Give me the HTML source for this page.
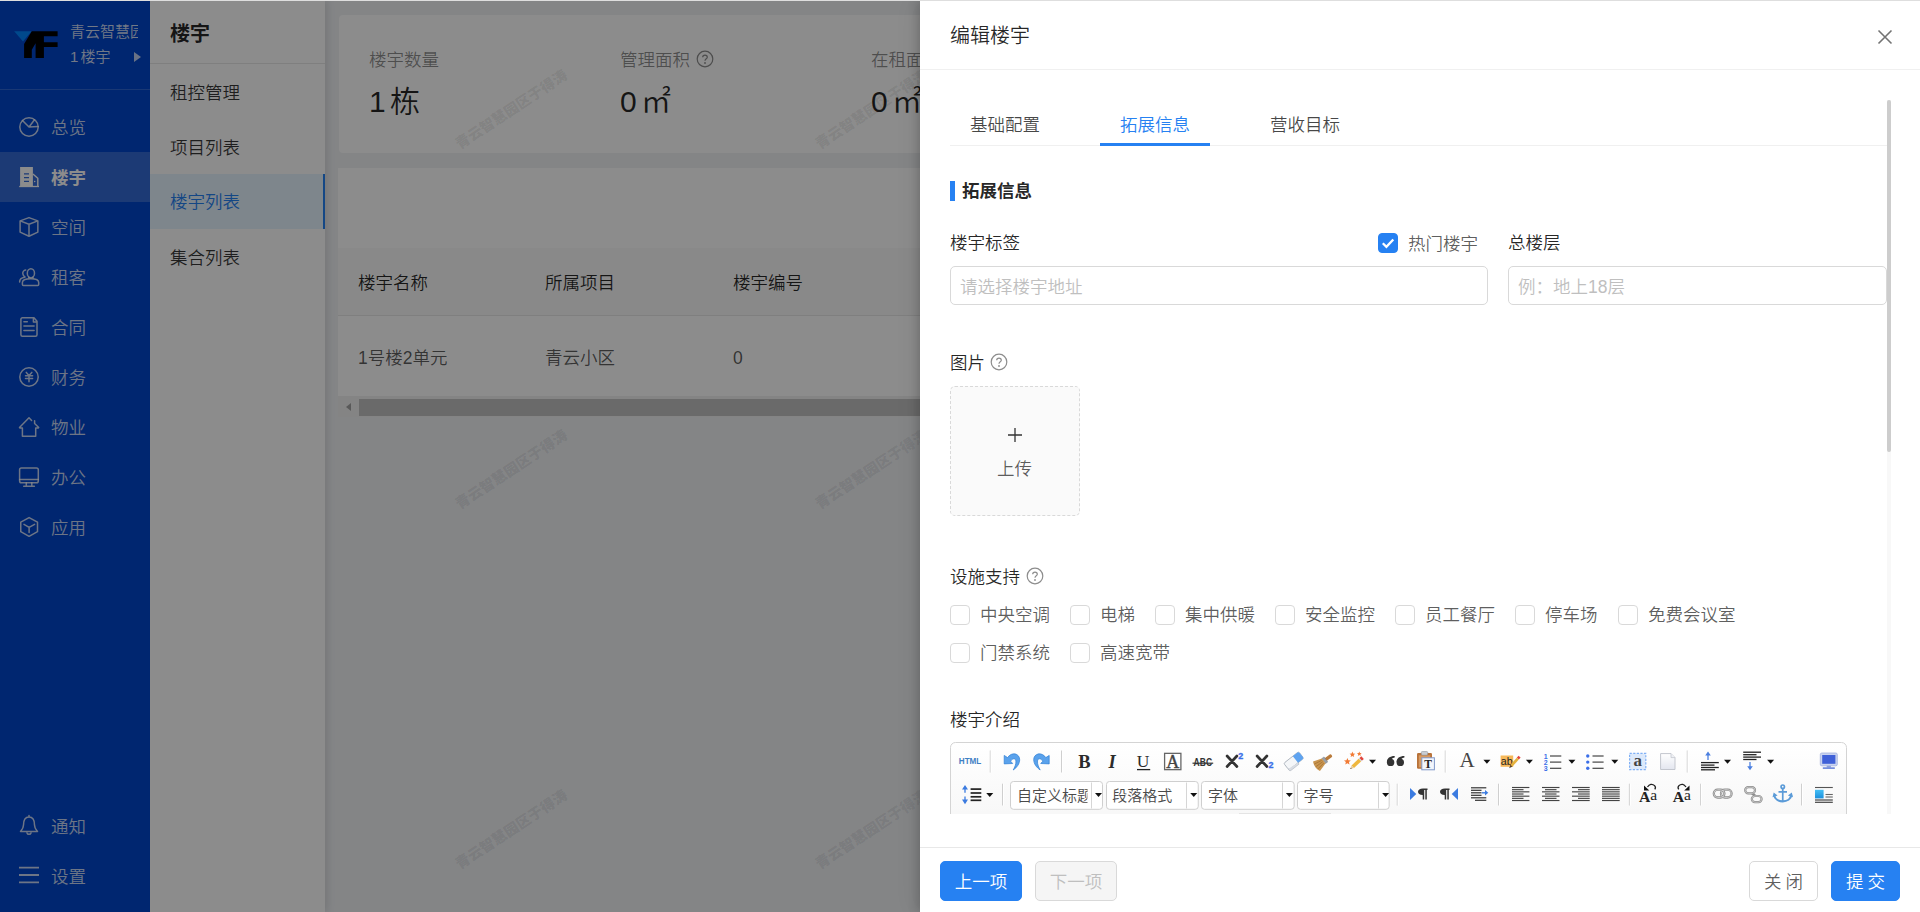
<!DOCTYPE html>
<html lang="zh-CN">
<head>
<meta charset="utf-8">
<title>编辑楼宇</title>
<style>
*{box-sizing:border-box;margin:0;padding:0}
html,body{width:1920px;height:912px;overflow:hidden;background:#f0f2f5}
body{font-family:"Liberation Sans","Noto Sans CJK SC",sans-serif;font-size:17.5px;color:rgba(0,0,0,.85);position:relative;font-weight:350}
.abs{position:absolute}
/* ---------- sidebar ---------- */
#side{position:absolute;left:0;top:0;width:150px;height:912px;background:#0045cc;color:#fff}
#side .hd{position:absolute;left:0;top:0;width:150px;height:90px;border-bottom:1px solid rgba(255,255,255,.18)}
#side .t1{position:absolute;left:70px;top:21px;width:68px;overflow:hidden;white-space:nowrap;font-size:15px;line-height:22px;color:rgba(255,255,255,.82)}
#side .t2{position:absolute;left:70px;top:46px;font-size:15px;line-height:22px;color:rgba(255,255,255,.82);white-space:nowrap}
#side .arr{position:absolute;left:134px;top:52px;width:0;height:0;border-left:7px solid rgba(255,255,255,.75);border-top:5.500px solid transparent;border-bottom:5.500px solid transparent}
.mi{position:absolute;left:0;width:150px;height:50px;line-height:50px;color:rgba(255,255,255,.78);font-size:17.5px}
.mi span{position:absolute;left:51px;top:1px;white-space:nowrap}
.mi svg{position:absolute;left:18px;top:14px;width:22px;height:22px;fill:none;stroke:rgba(255,255,255,.78);stroke-width:1.5;stroke-linecap:round;stroke-linejoin:round}
.mi.on{background:rgba(255,255,255,.2);color:#fff;font-weight:700}
/* ---------- submenu ---------- */
#sub{position:absolute;left:150px;top:0;width:175px;height:912px;background:#fff;box-shadow:2px 0 8px rgba(0,0,0,.12)}
#sub h3{position:absolute;left:20px;top:20px;font-size:20px;line-height:28px;font-weight:700;color:rgba(0,0,0,.85)}
#sub .ln{position:absolute;left:0;top:63px;width:175px;height:1px;background:#e8e8e8}
.si{position:absolute;left:0;width:175px;height:55px;line-height:55px;padding-left:20px;color:rgba(0,0,0,.78)}
.si.on{background:#e6f5ff;color:#2681f2;border-right:2px solid #2681f2}
/* ---------- main ---------- */
#main{position:absolute;left:325px;top:0;width:1595px;height:912px;background:#f0f2f5;overflow:hidden}
.card{position:absolute;background:#fff;border-radius:4px}
.stat .k{position:absolute;top:48px;font-size:17.5px;line-height:24px;color:rgba(0,0,0,.45);white-space:nowrap}
.stat .v{position:absolute;top:80px;font-size:30px;line-height:42px;color:rgba(0,0,0,.85);white-space:nowrap;word-spacing:-4px}
.wm{position:absolute;font-size:14.500px;color:rgba(0,0,0,.085);transform:rotate(-33.500deg);transform-origin:left bottom;white-space:nowrap;font-weight:900}
/* ---------- mask & drawer ---------- */
#mask{position:absolute;left:0;top:0;width:1920px;height:912px;background:rgba(0,0,0,.45)}
#drawer{position:absolute;left:920px;top:0;width:1000px;height:912px;background:#fff;box-shadow:-2px 0 10px rgba(0,0,0,.2),-6px 0 24px rgba(0,0,0,.04)}
#drawer .title{position:absolute;left:30px;top:21px;font-size:20px;line-height:30px;color:rgba(0,0,0,.85)}
#drawer .hline{position:absolute;left:0;top:69px;width:1000px;height:1px;background:#f0f0f0}
.tab{position:absolute;top:111px;font-size:17.5px;line-height:28px;color:rgba(0,0,0,.72);white-space:nowrap}
.lbl{position:absolute;font-size:17.5px;line-height:26px;color:rgba(0,0,0,.85);white-space:nowrap}
.inp{position:absolute;height:39px;border:1px solid #d9d9d9;border-radius:5px;background:#fff;line-height:40px;padding-left:9px;color:#bfbfbf;font-size:17.5px;white-space:nowrap}
.cb{position:absolute;width:20px;height:20px;border:1px solid #d9d9d9;border-radius:4px;background:#fff}
.ct{position:absolute;margin-top:1px;font-size:17.5px;line-height:26px;color:rgba(0,0,0,.65);white-space:nowrap}
.q{position:absolute;width:18px;height:18px}
.btn{position:absolute;top:861px;height:40px;border-radius:5px;font-size:17.5px;line-height:40px;text-align:center;white-space:nowrap}
</style>
</head>
<body>
<!-- ======= underlying page ======= -->
<div id="main">
<div class="card stat" style="left:14px;top:15px;width:1600px;height:138px">
<div class="k" style="left:30px;top:33px">楼宇数量</div><div class="v" style="left:30px;top:66px">1 栋</div>
<div class="k" style="left:281px;top:33px">管理面积</div>
<svg class="q" style="left:357px;top:35px" viewBox="0 0 18 18"><circle cx="9" cy="9" r="7.800" fill="none" stroke="rgba(0,0,0,.45)" stroke-width="1.200"/><path d="M6.700 7.200C6.700 4.300 11.300 4.300 11.300 7.200C11.300 8.800 9 8.800 9 10.800" fill="none" stroke="rgba(0,0,0,.45)" stroke-width="1.200"/><circle cx="9" cy="13" r=".900" fill="rgba(0,0,0,.45)"/></svg>
<div class="v" style="left:281px;top:66px">0 ㎡</div>
<div class="k" style="left:532px;top:33px">在租面积</div><div class="v" style="left:532px;top:66px">0 ㎡</div>
</div>
<div class="card" style="left:13px;top:168px;width:1600px;height:249px;border-radius:0">
<div class="abs" style="left:0;top:80px;width:1600px;height:68px;background:#fafafa;border-bottom:1px solid #e8e8e8"></div>
<div class="lbl" style="left:20px;top:102px">楼宇名称</div>
<div class="lbl" style="left:207px;top:102px">所属项目</div>
<div class="lbl" style="left:395px;top:102px">楼宇编号</div>
<div class="ct" style="left:20px;top:176px">1号楼2单元</div>
<div class="ct" style="left:207px;top:176px">青云小区</div>
<div class="ct" style="left:395px;top:176px">0</div>
<div class="abs" style="left:0;top:228px;width:1600px;height:21px;background:#f1f1f1"></div>
<div class="abs" style="left:8px;top:235px;width:0;height:0;border-right:5px solid #a3a3a3;border-top:4.500px solid transparent;border-bottom:4.500px solid transparent"></div>
<div class="abs" style="left:21px;top:231px;width:1580px;height:17px;background:#c1c1c1"></div>
</div>
<div class="wm" style="left:137px;top:132px">青云智慧园区于得涛</div>
<div class="wm" style="left:497px;top:132px">青云智慧园区于得涛</div>
<div class="wm" style="left:137px;top:492px">青云智慧园区于得涛</div>
<div class="wm" style="left:497px;top:492px">青云智慧园区于得涛</div>
<div class="wm" style="left:137px;top:852px">青云智慧园区于得涛</div>
<div class="wm" style="left:497px;top:852px">青云智慧园区于得涛</div>
</div>
<div id="sub">
<h3>楼宇</h3>
<div class="ln"></div>
<div class="si" style="top:66px">租控管理</div>
<div class="si" style="top:121px">项目列表</div>
<div class="si on" style="top:174px;line-height:57px">楼宇列表</div>
<div class="si" style="top:231px">集合列表</div>
</div>
<div id="side">
<div class="hd">
<svg class="abs" style="left:0;top:0" width="70" height="70" viewBox="0 0 70 70"><polygon points="14.200,31.200 31.600,31.200 23,41.400" fill="#0086ff"/><path d="M31.800 31.200H57.600V36.200H43.900V42.200H57.600V47.100H43.900V58.100H35.600V43.300L31.800 49.800V58.100H24.100V43.900Z" fill="#000"/></svg>
<div class="t1">青云智慧园区</div>
<div class="t2" style="word-spacing:-2px">1 楼宇</div>
<div class="arr"></div>
</div>
<div class="mi" style="top:102px"><svg viewBox="0 0 22 22"><circle cx="11" cy="11" r="9.200"/><path d="M4.500 4.500L11 11L16.500 3.700M11 11L20.200 10.500"/></svg><span>总览</span></div>
<div class="mi on" style="top:152px"><svg viewBox="0 0 22 22"><path d="M2.100 1.100H14.900V19.900H2.100ZM6 7.200H11V8.500H6ZM6 11H11V12.200H6ZM6 14.700H11V15.900H6Z" fill="#fff" fill-rule="evenodd" stroke="none"/><path d="M14.900 8L19.800 12.300V19.900" fill="none" stroke="#fff" stroke-width="1.400" stroke-linecap="butt"/><circle cx="16.700" cy="15.400" r=".750" fill="#fff" stroke="none"/><path d="M1.200 20.500H21" fill="none" stroke="#fff" stroke-width="1.300" stroke-linecap="butt"/></svg><span>楼宇</span></div>
<div class="mi" style="top:202px"><svg viewBox="0 0 22 22"><path d="M11 1.600L19.850 4.900V16.100L11 20.200L2.100 16.100V4.900ZM2.100 4.900L11 8.300L19.850 4.900M11 8.300V20.200"/></svg><span>空间</span></div>
<div class="mi" style="top:252px"><svg viewBox="0 0 22 22"><ellipse cx="12.900" cy="7.200" rx="3.600" ry="4.500"/><path d="M5.400 19.500A1 1 0 0 1 4.400 18.500V16.500C4.400 14 8 12.800 12.900 12.800C17.800 12.800 20.700 14 20.700 16.500V18.500A1 1 0 0 1 19.700 19.500ZM10.800 11.200V12.900M15 11.200V12.900M7.700 4.100C5.500 4.300 4.600 6 4.800 7.600C5 9.200 5.800 10.300 7 11M6.600 11.300C3.500 11.800 1.600 13.300 1.600 16"/></svg><span>租客</span></div>
<div class="mi" style="top:302px"><svg viewBox="0 0 22 22"><path d="M4.400 1.800H16L19 5.200V18.700A1.500 1.500 0 0 1 17.500 20.200H4.400A1.500 1.500 0 0 1 2.900 18.700V3.300A1.500 1.500 0 0 1 4.400 1.800ZM15.400 2.200V5.900H18.800M5.900 5.700H9.300M5.900 10.100H16.100M5.900 14.500H16.100"/></svg><span>合同</span></div>
<div class="mi" style="top:352px"><svg viewBox="0 0 22 22"><circle cx="11" cy="11" r="9.200"/><path d="M8.300 6.400L11 9.400L13.800 6.400M11 9.400V15.700M7.500 9.700H14.600M7.500 12.600H14.600"/></svg><span>财务</span></div>
<div class="mi" style="top:402px"><svg viewBox="0 0 22 22"><path d="M13.600 4.400L11 1.700L1.500 11.500L2 12.100H4.400V20.300H17.700V12.100H20.200L20.700 11.500L16.600 7.500V4.700"/></svg><span>物业</span></div>
<div class="mi" style="top:452px"><svg viewBox="0 0 22 22"><rect x="1.600" y="1.900" width="18.700" height="14.800" rx="1.800"/><path d="M1.600 13.400H20.300M8.300 16.700V20.300M13.800 16.700V20.300M5.700 20.300H16.400"/></svg><span>办公</span></div>
<div class="mi" style="top:502px"><svg viewBox="0 0 22 22"><path d="M11.100 1.600L19.500 6.200V15.700L11.100 20.300L2.750 15.700V6.200ZM6 8.300L11.100 11.300L16.600 8.300M11.100 11.300V16.600"/></svg><span>应用</span></div>
<div class="mi" style="top:801px"><svg viewBox="0 0 22 22" style="top:13px"><path d="M11 1.500V3M11 3C6.500 3 5.500 7.500 5.500 11C5.500 14 4 15.500 2.500 17.500H19.500C18 15.500 16.500 14 16.500 11C16.500 7.500 15.500 3 11 3M9 19C9.500 20.800 12.500 20.800 13 19"/></svg><span>通知</span></div>
<div class="mi" style="top:851px"><svg viewBox="0 0 22 22" style="top:13px"><path d="M1 3.600H21M1 11H21M1 18.400H21" style="stroke-linecap:butt;stroke-width:1.800"/></svg><span>设置</span></div>
</div>
<div id="mask"></div>
<!-- ======= drawer ======= -->
<div id="drawer">
<div class="title">编辑楼宇</div>
<svg class="abs" style="left:957px;top:29px" width="16" height="16" viewBox="0 0 16 16"><path d="M1.500 1.500L14.500 14.500M14.500 1.500L1.500 14.500" stroke="rgba(0,0,0,.55)" stroke-width="1.600" fill="none"/></svg>
<div class="hline"></div>
<!-- tabs -->
<div class="abs" style="left:30px;top:145px;width:937px;height:1px;background:#f0f0f0"></div>
<div class="tab" style="left:50px">基础配置</div>
<div class="tab" style="left:200px;color:#2681f2">拓展信息</div>
<div class="tab" style="left:350px">营收目标</div>
<div class="abs" style="left:180px;top:143px;width:110px;height:3px;background:#2681f2"></div>
<!-- section -->
<div class="abs" style="left:30px;top:181px;width:5px;height:20px;background:#2681f2"></div>
<div class="lbl" style="left:42px;top:178px;font-weight:700">拓展信息</div>
<div class="lbl" style="left:30px;top:230px">楼宇标签</div>
<div class="cb" style="left:458px;top:233px;background:#2681f2;border-color:#2681f2"><svg class="abs" style="left:0;top:0" width="18" height="18" viewBox="0 0 18 18"><path d="M3.800 9.300L7.400 12.900L14.300 5.500" fill="none" stroke="#fff" stroke-width="2.300"/></svg></div>
<div class="ct" style="left:488px;top:230px">热门楼宇</div>
<div class="lbl" style="left:588px;top:230px">总楼层</div>
<div class="inp" style="left:30px;top:266px;width:538px">请选择楼宇地址</div>
<div class="inp" style="left:588px;top:266px;width:379px">例：地上18层</div>
<div class="lbl" style="left:30px;top:350px">图片</div>
<svg class="q" style="left:70px;top:353px" viewBox="0 0 18 18"><circle cx="9" cy="9" r="7.800" fill="none" stroke="rgba(0,0,0,.45)" stroke-width="1.200"/><path d="M6.700 7.200C6.700 4.300 11.300 4.300 11.300 7.200C11.300 8.800 9 8.800 9 10.800" fill="none" stroke="rgba(0,0,0,.45)" stroke-width="1.200"/><circle cx="9" cy="13" r=".900" fill="rgba(0,0,0,.45)"/></svg>
<div class="abs" style="left:30px;top:386px;width:130px;height:130px;border:1px dashed #d9d9d9;border-radius:5px;background:#fafafa"></div>
<svg class="abs" style="left:88px;top:428px" width="14" height="14" viewBox="0 0 14 14"><path d="M7 0V14M0 7H14" stroke="rgba(0,0,0,.8)" stroke-width="1.300"/></svg>
<div class="ct" style="left:77px;top:455px">上传</div>
<div class="lbl" style="left:30px;top:564px">设施支持</div>
<svg class="q" style="left:106px;top:567px" viewBox="0 0 18 18"><circle cx="9" cy="9" r="7.800" fill="none" stroke="rgba(0,0,0,.45)" stroke-width="1.200"/><path d="M6.700 7.200C6.700 4.300 11.300 4.300 11.300 7.200C11.300 8.800 9 8.800 9 10.800" fill="none" stroke="rgba(0,0,0,.45)" stroke-width="1.200"/><circle cx="9" cy="13" r=".900" fill="rgba(0,0,0,.45)"/></svg><div class="cb" style="left:30px;top:605px"></div><div class="ct" style="left:60px;top:601px">中央空调</div>
<div class="cb" style="left:150px;top:605px"></div><div class="ct" style="left:180px;top:601px">电梯</div>
<div class="cb" style="left:235px;top:605px"></div><div class="ct" style="left:265px;top:601px">集中供暖</div>
<div class="cb" style="left:355px;top:605px"></div><div class="ct" style="left:385px;top:601px">安全监控</div>
<div class="cb" style="left:475px;top:605px"></div><div class="ct" style="left:505px;top:601px">员工餐厅</div>
<div class="cb" style="left:595px;top:605px"></div><div class="ct" style="left:625px;top:601px">停车场</div>
<div class="cb" style="left:698px;top:605px"></div><div class="ct" style="left:728px;top:601px">免费会议室</div>
<div class="cb" style="left:30px;top:643px"></div><div class="ct" style="left:60px;top:639px">门禁系统</div>
<div class="cb" style="left:150px;top:643px"></div><div class="ct" style="left:180px;top:639px">高速宽带</div>

<div class="lbl" style="left:30px;top:707px">楼宇介绍</div>
<!-- editor toolbar -->
<!--ED--><svg class="abs" style="left:0;top:735px" width="1000" height="79" viewBox="920 735 1000 79" font-family="Liberation Sans,Noto Sans CJK SC,sans-serif"><defs><linearGradient id="tbg" x1="0" y1="0" x2="0" y2="1"><stop offset="0" stop-color="#fff"/><stop offset="1" stop-color="#f6f6f6"/></linearGradient><linearGradient id="docg" x1="0" y1="0" x2="0" y2="1"><stop offset="0" stop-color="#fff"/><stop offset="1" stop-color="#e3e6ef"/></linearGradient><linearGradient id="sqg" x1="0" y1="0" x2="0" y2="1"><stop offset="0" stop-color="#45c0f5"/><stop offset="1" stop-color="#1c8fdc"/></linearGradient><clipPath id="c1"><rect x="1011" y="782" width="76.500" height="27"/></clipPath></defs><rect x="950.500" y="742.500" width="896" height="90" rx="5" fill="url(#tbg)" stroke="#d4d4d4"/><text x="958.800" y="764.300" font-size="8.500" font-weight="700" fill="#3f7fc4" textLength="22.500" lengthAdjust="spacingAndGlyphs">HTML</text><path d="M990.25 750.5V772.5" stroke="#cfcfcf" stroke-width="1"/><path d="M991.25 750.5V772.5" stroke="#fff" stroke-width="1"/><path d="M1004.200 755.400L1004.200 763.900L1012.700 763.500L1010.600 761.200C1012.300 758.300 1015.600 757.800 1015.900 761C1016.200 764.500 1014.500 767.500 1013.200 770C1017 767.500 1019.700 763.500 1019.700 759.800C1019.700 753.200 1011.500 751.500 1007.600 757.600Z" fill="#5aa2ec" stroke="#2f7fd6" stroke-width=".700"/><path d="M1004.200 755.400L1004.200 763.900L1012.700 763.500L1010.600 761.200C1012.300 758.300 1015.600 757.800 1015.900 761C1016.200 764.500 1014.500 767.500 1013.200 770C1017 767.500 1019.700 763.500 1019.700 759.800C1019.700 753.200 1011.500 751.500 1007.600 757.600Z" fill="#5aa2ec" stroke="#2f7fd6" stroke-width=".700" transform="translate(2053.400,0) scale(-1,1)"/><path d="M1061.5 750.5V772.5" stroke="#cfcfcf" stroke-width="1"/><path d="M1062.5 750.5V772.5" stroke="#fff" stroke-width="1"/><g font-family="Liberation Serif,serif" fill="#2b2b2b"><text x="1078.300" y="767.800" font-size="18.500" font-weight="700">B</text><text x="1108.500" y="767.800" font-size="18.500" font-weight="700" font-style="italic">I</text><text x="1136.800" y="767.400" font-size="17.500">U</text></g><path d="M1137 769.6H1150.2" stroke="#222" stroke-width="1.3"/><rect x="1164.600" y="753.350" width="16.300" height="16.300" fill="#fff" stroke="#666" stroke-width="1.300"/><text x="1172.750" y="768.300" font-size="18" text-anchor="middle" font-family="Liberation Serif,serif" fill="#444" stroke="#444" stroke-width=".400">A</text><text x="1193.600" y="766.400" font-size="10.500" font-weight="700" fill="#333" textLength="18.500" lengthAdjust="spacingAndGlyphs">ABC</text><path d="M1192.5 763.2H1213.2" stroke="#333" stroke-width="1.2"/><path d="M1227.1 756L1236.9 766.500M1236.9 756L1227.1 766.500" stroke="#333" stroke-width="2.700" stroke-linecap="round"/><text x="1238.3" y="758.8" font-size="9" font-weight="700" fill="#3b6fe8" stroke="#3b6fe8" stroke-width=".300">2</text><path d="M1257.1 756L1266.9 766.500M1266.9 756L1257.1 766.500" stroke="#333" stroke-width="2.700" stroke-linecap="round"/><text x="1268.5" y="767.9" font-size="9" font-weight="700" fill="#3b6fe8" stroke="#3b6fe8" stroke-width=".300">2</text><g transform="translate(1293.750,760.800) rotate(-38) scale(.86,.84)"><rect x="-11" y="-5" width="22" height="10" rx="1.800" fill="#f4f6f8" stroke="#a9b0ba" stroke-width="1"/><path d="M2.500 -5H9.200A1.800 1.800 0 0 1 11 -3.200V3.200A1.800 1.800 0 0 1 9.200 5H2.500Z" fill="#5ea3f0"/><path d="M-11 3.500V5.500A1.500 1.500 0 0 0 -9.500 7H2.500V5" fill="#d9dde3" stroke="#a9b0ba" stroke-width=".600"/></g><g transform="translate(1323.300,761.300) rotate(54) scale(.86,.8)"><rect x="-1.900" y="-13" width="3.800" height="10" rx="1.600" fill="#b97a3a"/><rect x="-3.600" y="-4" width="7.200" height="3.400" fill="#9aa0a8" stroke="#6f747b" stroke-width=".500"/><path d="M-3.600 -.600H3.600L6.800 10.500C3 12.800 -3 12.800 -6.800 10.500Z" fill="#c9954f"/><path d="M-2 1L-3.500 11M0 1V11.800M2 1L3.500 11" stroke="#9c6a2c" stroke-width=".700" fill="none"/></g><g transform="translate(1356.800,763) rotate(47) scale(.95,.88)"><rect x="-1.900" y="-9" width="3.800" height="3" fill="#e2453d"/><rect x="-1.900" y="-6" width="3.800" height="1.300" fill="#c9ccd2"/><rect x="-1.900" y="-4.700" width="3.800" height="11" fill="#efb73e"/><path d="M-1.900 6.300H1.900L0 10Z" fill="#e8c89a"/><path d="M-.700 8.600H.700L0 10Z" fill="#333"/></g><polygon points="1347.4,758 1348.35,760.29 1350.82,760.49 1348.94,762.1 1349.52,764.51 1347.4,763.22 1345.28,764.51 1345.86,762.1 1343.98,760.49 1346.45,760.29" fill="#f27b35"/><polygon points="1352.4,751.6 1353.19,753.51 1355.25,753.67 1353.68,755.02 1354.16,757.03 1352.4,755.95 1350.64,757.03 1351.12,755.02 1349.55,753.67 1351.61,753.51" fill="#f27b35"/><polygon points="1359.3,751.4 1359.96,752.99 1361.68,753.13 1360.37,754.25 1360.77,755.92 1359.3,755.02 1357.83,755.92 1358.23,754.25 1356.92,753.13 1358.64,752.99" fill="#f27b35"/><polygon points="1369,759.75 1376,759.75 1372.5,763.75" fill="#111"/><path d="M1386.9 762.300C1386.9 758.200 1389.9 756 1394.7 756L1394.7 757.600C1392.1 758.200 1391.1 759.500 1391.3 761Z" fill="#333"/><circle cx="1390.6" cy="762.400" r="3.700" fill="#333"/><path d="M1396.6 762.300C1396.6 758.200 1399.6 756 1404.4 756L1404.4 757.600C1401.8 758.200 1400.8 759.500 1401 761Z" fill="#333"/><circle cx="1400.3" cy="762.400" r="3.700" fill="#333"/><rect x="1417" y="753" width="15" height="15.700" rx="1.200" fill="#b87239"/><rect x="1418.800" y="755.300" width="11.400" height="12" fill="#d79a62"/><rect x="1421.300" y="751.500" width="6.400" height="3.600" rx="1" fill="#c9cdd3" stroke="#8f959d" stroke-width=".600"/><rect x="1421.800" y="757.800" width="12.600" height="12" fill="#f3f6fc" stroke="#7f97c8" stroke-width="1"/><text x="1428.100" y="768.300" font-size="11.500" font-weight="700" text-anchor="middle" font-family="Liberation Serif,serif" fill="#222">T</text><path d="M1445.25 750.5V772.5" stroke="#cfcfcf" stroke-width="1"/><path d="M1446.25 750.5V772.5" stroke="#fff" stroke-width="1"/><text x="1459.600" y="766.900" font-size="21" font-family="Liberation Serif,serif" fill="#444">A</text><polygon points="1483.4,759.75 1490.4,759.75 1486.9,763.75" fill="#111"/><rect x="1500.600" y="755.500" width="12.600" height="11.300" fill="#f6b95a"/><text x="1500.800" y="765.300" font-size="11.500" fill="#222" textLength="11.800" lengthAdjust="spacingAndGlyphs">ab</text><g transform="translate(1514,762.800) rotate(42)"><rect x="-1.400" y="-8.300" width="2.800" height="2.600" fill="#e2453d"/><rect x="-1.400" y="-5.700" width="2.800" height="9.500" fill="#e6b13c"/><path d="M-1.400 3.800H1.400L0 7.200Z" fill="#5a4630"/></g><polygon points="1525.9,759.75 1532.9,759.75 1529.4,763.75" fill="#111"/><text x="1543.800" y="758.5" font-size="7" font-weight="700" fill="#3b6fe8">1</text><path d="M1550 756H1561.3" stroke="#444" stroke-width="1.2"/><text x="1543.800" y="764.6" font-size="7" font-weight="700" fill="#3b6fe8">2</text><path d="M1550 762.1H1561.3" stroke="#444" stroke-width="1.2"/><text x="1543.800" y="770.8" font-size="7" font-weight="700" fill="#3b6fe8">3</text><path d="M1550 768.3H1561.3" stroke="#444" stroke-width="1.2"/><polygon points="1568.4,759.75 1575.4,759.75 1571.9,763.75" fill="#111"/><circle cx="1587.750" cy="756" r="1.700" fill="#3b6fe8"/><path d="M1592.5 756H1603.6" stroke="#444" stroke-width="1.2"/><circle cx="1587.750" cy="762.1" r="1.700" fill="#3b6fe8"/><path d="M1592.5 762.1H1603.6" stroke="#444" stroke-width="1.2"/><circle cx="1587.750" cy="768.3" r="1.700" fill="#3b6fe8"/><path d="M1592.5 768.3H1603.6" stroke="#444" stroke-width="1.2"/><polygon points="1611.25,759.75 1618.25,759.75 1614.75,763.75" fill="#111"/><rect x="1629.600" y="753.350" width="16.200" height="16.200" fill="#dce9fb" stroke="#7fb0f5" stroke-width="1.200" stroke-dasharray="2.200 1.400"/><text x="1637.750" y="766" font-size="17" font-weight="700" text-anchor="middle" font-family="Liberation Serif,serif" fill="#444">a</text><path d="M1660.600 753.600H1671L1675 757.600V769.500H1660.600Z" fill="url(#docg)" stroke="#c3c6ce" stroke-width="1"/><path d="M1671 753.600V757.600H1675" fill="#eef0f5" stroke="#c3c6ce" stroke-width=".800"/><path d="M1687.25 750.5V772.5" stroke="#cfcfcf" stroke-width="1"/><path d="M1688.25 750.5V772.5" stroke="#fff" stroke-width="1"/><path d="M1701 762.6H1718.8" stroke="#222" stroke-width="1.3"/><path d="M1701 765.1H1714.5" stroke="#222" stroke-width="1.3"/><path d="M1701 767.5H1718.8" stroke="#222" stroke-width="1.3"/><path d="M1701 769.8H1715" stroke="#222" stroke-width="1.3"/><path d="M1708 760V753" stroke="#4a7fe0" stroke-width="1.300"/><path d="M1705.200 755.500L1708 751.600L1710.800 755.500Z" fill="#4a7fe0"/><polygon points="1724,759.75 1731,759.75 1727.5,763.75" fill="#111"/><path d="M1743.2 752.2H1761" stroke="#222" stroke-width="1.3"/><path d="M1743.2 754.7H1756.5" stroke="#222" stroke-width="1.3"/><path d="M1743.2 757.1H1761" stroke="#222" stroke-width="1.3"/><path d="M1743.2 759.5H1756.5" stroke="#222" stroke-width="1.3"/><path d="M1750 762V768.500" stroke="#4a7fe0" stroke-width="1.300"/><path d="M1747.200 766.200L1750 770.200L1752.800 766.200Z" fill="#4a7fe0"/><polygon points="1767.1,759.75 1774.1,759.75 1770.6,763.75" fill="#111"/><rect x="1820.300" y="753" width="17" height="12.800" rx="1.500" fill="#c9d3ef" stroke="#a3b1de" stroke-width=".800"/><rect x="1822.200" y="755" width="13.200" height="8.800" fill="#3f60d8"/><rect x="1826.700" y="765.800" width="4.200" height="1.700" fill="#8ea2dc"/><rect x="1822.800" y="767.400" width="12" height="1.400" fill="#5575d6"/><path d="M965 787V792.800M965 796.400V802" stroke="#3b7be0" stroke-width="1.300"/><path d="M962 789.500L965 785L968 789.500Z M962 799.600L965 804.200L968 799.600Z" fill="#3b7be0"/><path d="M970.6 789.1H981.3" stroke="#222" stroke-width="1.7"/><path d="M970.6 793H981.3" stroke="#222" stroke-width="1.7"/><path d="M970.6 796.8H981.3" stroke="#222" stroke-width="1.7"/><path d="M970.6 800.3H981.3" stroke="#222" stroke-width="1.7"/><polygon points="986.25,793 993.25,793 989.75,797" fill="#111"/><path d="M1002.5 783.7V805.5" stroke="#cfcfcf" stroke-width="1"/><path d="M1003.5 783.7V805.5" stroke="#fff" stroke-width="1"/><rect x="1010.5" y="781.500" width="92" height="27.800" rx="3" fill="#fff" stroke="#cfcfcf"/><path d="M1091.5 782.500V808.500" stroke="#d6d6d6"/><polygon points="1095,793 1102,793 1098.5,797" fill="#111"/><text x="1017" y="800.800" font-size="15" fill="#4a4a4a" clip-path="url(#c1)">自定义标题</text><rect x="1106.5" y="781.500" width="91.75" height="27.800" rx="3" fill="#fff" stroke="#cfcfcf"/><path d="M1186.5 782.500V808.500" stroke="#d6d6d6"/><polygon points="1190.25,793 1197.25,793 1193.75,797" fill="#111"/><text x="1112.3" y="800.800" font-size="15" fill="#4a4a4a">段落格式</text><rect x="1201.5" y="781.500" width="92.65" height="27.800" rx="3" fill="#fff" stroke="#cfcfcf"/><path d="M1282.5 782.500V808.500" stroke="#d6d6d6"/><polygon points="1285.9,793 1292.9,793 1289.4,797" fill="#111"/><text x="1208" y="800.800" font-size="15" fill="#4a4a4a">字体</text><rect x="1297.5" y="781.500" width="91.65" height="27.800" rx="3" fill="#fff" stroke="#cfcfcf"/><path d="M1378.5 782.500V808.500" stroke="#d6d6d6"/><polygon points="1382.1,793 1389.1,793 1385.6,797" fill="#111"/><text x="1303.5" y="800.800" font-size="15" fill="#4a4a4a">字号</text><path d="M1397.25 783.7V805.5" stroke="#cfcfcf" stroke-width="1"/><path d="M1398.25 783.7V805.5" stroke="#fff" stroke-width="1"/><polygon points="1410,788 1416.300,794 1410,800" fill="#3b7be0"/><path d="M5 0H9.500V1.500H8.800V11H7.300V1.500H6.200V11H4.700V6.500C1.500 6.500 0 5 0 3.200C0 1.300 1.800 0 5 0Z" transform="translate(1418,788.500)" fill="#333"/><path d="M5 0H9.500V1.500H8.800V11H7.300V1.500H6.200V11H4.700V6.500C1.500 6.500 0 5 0 3.200C0 1.300 1.800 0 5 0Z" transform="translate(1440,788.500)" fill="#333"/><polygon points="1458,788 1451.700,794 1458,800" fill="#3b7be0"/><path d="M1471 787.8H1486.3" stroke="#333" stroke-width="1.2"/><path d="M1471 790.3H1481.5" stroke="#333" stroke-width="1.2"/><path d="M1471 792.8H1481.5" stroke="#333" stroke-width="1.2"/><path d="M1471 795.3H1481.5" stroke="#333" stroke-width="1.2"/><path d="M1471 797.8H1486.3" stroke="#333" stroke-width="1.2"/><path d="M1475 800.3H1486.3" stroke="#333" stroke-width="1.2"/><path d="M1481.800 792.800H1486" stroke="#3b7be0" stroke-width="1.400"/><path d="M1485 790L1488.300 792.800L1485 795.600Z" fill="#3b7be0"/><path d="M1498.5 783.7V805.5" stroke="#cfcfcf" stroke-width="1"/><path d="M1499.5 783.7V805.5" stroke="#fff" stroke-width="1"/><path d="M1512 787.5H1529.4" stroke="#444" stroke-width="1.15"/><path d="M1542 787.5H1559.5" stroke="#444" stroke-width="1.15"/><path d="M1572 787.5H1589.7" stroke="#444" stroke-width="1.15"/><path d="M1602 787.5H1619.7" stroke="#444" stroke-width="1.15"/><path d="M1512 789.67H1523.5" stroke="#444" stroke-width="1.15"/><path d="M1545 789.67H1556.5" stroke="#444" stroke-width="1.15"/><path d="M1578 789.67H1589.7" stroke="#444" stroke-width="1.15"/><path d="M1602 789.67H1619.7" stroke="#444" stroke-width="1.15"/><path d="M1512 791.84H1529.4" stroke="#444" stroke-width="1.15"/><path d="M1542 791.84H1559.5" stroke="#444" stroke-width="1.15"/><path d="M1572 791.84H1589.7" stroke="#444" stroke-width="1.15"/><path d="M1602 791.84H1619.7" stroke="#444" stroke-width="1.15"/><path d="M1512 794.01H1523.5" stroke="#444" stroke-width="1.15"/><path d="M1545 794.01H1556.5" stroke="#444" stroke-width="1.15"/><path d="M1578 794.01H1589.7" stroke="#444" stroke-width="1.15"/><path d="M1602 794.01H1619.7" stroke="#444" stroke-width="1.15"/><path d="M1512 796.18H1529.4" stroke="#444" stroke-width="1.15"/><path d="M1542 796.18H1559.5" stroke="#444" stroke-width="1.15"/><path d="M1572 796.18H1589.7" stroke="#444" stroke-width="1.15"/><path d="M1602 796.18H1619.7" stroke="#444" stroke-width="1.15"/><path d="M1512 798.35H1523.5" stroke="#444" stroke-width="1.15"/><path d="M1545 798.35H1556.5" stroke="#444" stroke-width="1.15"/><path d="M1578 798.35H1589.7" stroke="#444" stroke-width="1.15"/><path d="M1602 798.35H1619.7" stroke="#444" stroke-width="1.15"/><path d="M1512 800.52H1529.4" stroke="#444" stroke-width="1.15"/><path d="M1542 800.52H1559.5" stroke="#444" stroke-width="1.15"/><path d="M1572 800.52H1589.7" stroke="#444" stroke-width="1.15"/><path d="M1602 800.52H1619.7" stroke="#444" stroke-width="1.15"/><path d="M1629.4 783.7V805.5" stroke="#cfcfcf" stroke-width="1"/><path d="M1630.4 783.7V805.5" stroke="#fff" stroke-width="1"/><text x="1639" y="802" font-size="15.500" font-weight="700" font-family="Liberation Serif,serif" fill="#222" textLength="11.400" lengthAdjust="spacingAndGlyphs">A</text><text x="1650.3" y="799.600" font-size="15.500" font-family="Liberation Serif,serif" fill="#222">a</text><path d="M1654.800 789.400C1656.800 786.500 1653.500 784 1650.800 784.400C1649.300 784.700 1648.300 785.800 1647.500 787" fill="none" stroke="#222" stroke-width="1.300"/><path d="M1644 785.500V790.600H1649.300Z" fill="#111"/><text x="1672.7" y="802" font-size="15.500" font-weight="700" font-family="Liberation Serif,serif" fill="#222" textLength="11.400" lengthAdjust="spacingAndGlyphs">A</text><text x="1684" y="799.600" font-size="15.500" font-family="Liberation Serif,serif" fill="#222">a</text><path d="M1678.700 789.400C1676.700 786.500 1680 784 1682.700 784.400C1684.200 784.700 1685.200 785.800 1686 787" fill="none" stroke="#222" stroke-width="1.300"/><path d="M1689.500 785.500V790.600H1684.200Z" fill="#111"/><path d="M1700.6 783.7V805.5" stroke="#cfcfcf" stroke-width="1"/><path d="M1701.6 783.7V805.5" stroke="#fff" stroke-width="1"/><rect x="1713.800" y="789.700" width="10.600" height="7.800" rx="3.900" fill="none" stroke="#8d8d8d" stroke-width="2.300"/><rect x="1721" y="789.700" width="10.600" height="7.800" rx="3.900" fill="none" stroke="#8d8d8d" stroke-width="2.300"/><rect x="1713.800" y="789.700" width="10.600" height="7.800" rx="3.900" fill="none" stroke="#d6d6d6" stroke-width=".800"/><rect x="1721" y="789.700" width="10.600" height="7.800" rx="3.900" fill="none" stroke="#d6d6d6" stroke-width=".800"/><rect x="1745.200" y="787.200" width="9.800" height="6.200" rx="3.100" fill="none" stroke="#8d8d8d" stroke-width="2.200"/><rect x="1751.800" y="796" width="9.800" height="6.200" rx="3.100" fill="none" stroke="#8d8d8d" stroke-width="2.200"/><path d="M1752 793.500L1755.500 796" stroke="#8d8d8d" stroke-width="2.400" fill="none"/><rect x="1745.200" y="787.200" width="9.800" height="6.200" rx="3.100" fill="none" stroke="#dcdcdc" stroke-width=".700"/><rect x="1751.800" y="796" width="9.800" height="6.200" rx="3.100" fill="none" stroke="#dcdcdc" stroke-width=".700"/><g stroke="#5b9bd8" fill="none" stroke-width="1.700"><circle cx="1782.750" cy="786.700" r="1.700"/><path d="M1782.750 788.500V802M1778.500 791.800H1787"/><path d="M1774.200 794.800C1775 803.500 1790.500 803.500 1791.300 794.800" stroke-width="2.200"/></g><path d="M1772.500 797.300L1773.700 792.500L1777.600 795.500Z M1793 797.300L1791.800 792.500L1787.900 795.500Z" fill="#5b9bd8"/><path d="M1801.5 783.7V805.5" stroke="#cfcfcf" stroke-width="1"/><path d="M1802.5 783.7V805.5" stroke="#fff" stroke-width="1"/><rect x="1815" y="789.800" width="8.600" height="8.600" fill="url(#sqg)"/><path d="M1815 787.5H1832.8" stroke="#555" stroke-width="1.1"/><path d="M1825.5 794.5H1832.8" stroke="#666" stroke-width="1.1"/><path d="M1825.5 797H1832.8" stroke="#666" stroke-width="1.1"/><path d="M1815 800H1832.8" stroke="#444" stroke-width="1.2"/><path d="M1815 802.3H1832.8" stroke="#444" stroke-width="1.2"/><path d="M1239 813.500H1331" stroke="#e4e4e4"/></svg><!--/ED-->
<!-- scrollbar -->
<div class="abs" style="left:967px;top:100px;width:4px;height:714px;background:#f8f8f8"></div>
<div class="abs" style="left:967px;top:100px;width:4px;height:352px;background:#cdcdcd;border-radius:2px"></div>
<!-- footer -->
<div class="abs" style="left:0;top:847px;width:1000px;height:65px;background:#fff;border-top:1px solid #e8e8e8"></div>
<div class="btn" style="left:20px;width:82px;background:#2681f2;color:#fff;border:1px solid #2681f2">上一项</div>
<div class="btn" style="left:115px;width:82px;background:#f5f5f5;color:#bfbfbf;border:1px solid #d9d9d9">下一项</div>
<div class="btn" style="left:829px;width:69px;background:#fff;color:rgba(0,0,0,.65);border:1px solid #d9d9d9;letter-spacing:4px;padding-left:4px">关闭</div>
<div class="btn" style="left:911px;width:69px;background:#2681f2;color:#fff;border:1px solid #2681f2;letter-spacing:4px;padding-left:4px">提交</div>
</div>
<div class="abs" style="left:0;top:0;width:1920px;height:1px;background:#dedede"></div>
</body>
</html>
